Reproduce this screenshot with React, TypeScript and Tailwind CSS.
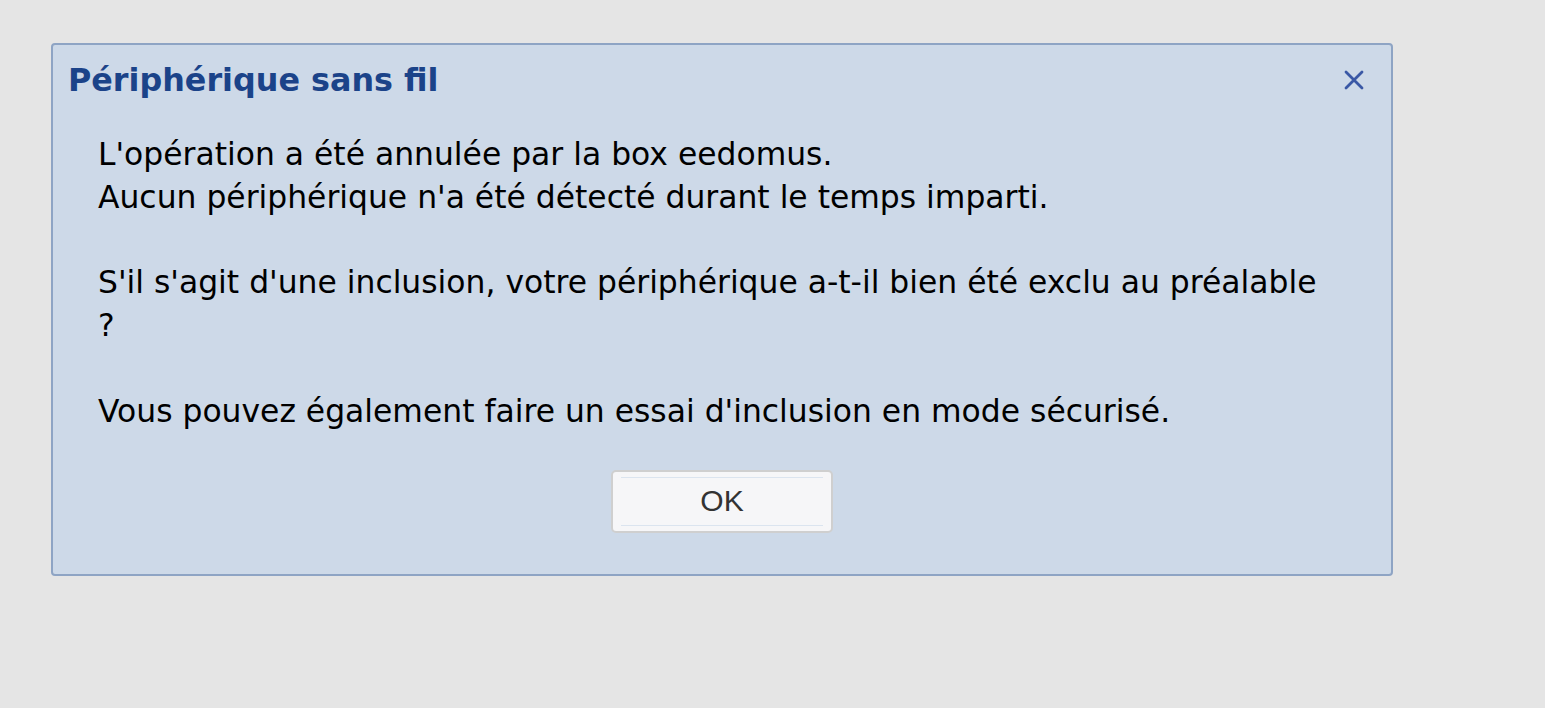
export default function App() {
  return (
    <div className="min-h-screen w-full bg-[#e5e5e5] pt-[43px] pl-[51px]" style={{ fontFamily: '"DejaVu Sans", Verdana, sans-serif' }}>
      <div className="flex h-[533px] w-[1342px] flex-col rounded-[4px] border-2 border-[#8ea4c4] bg-[#cdd9e8]">
        <div className="flex items-center justify-between pl-[15px] pr-[24px] pt-[17px]">
          <h1 className="text-[31.8px] font-bold leading-[36px] text-[#1b4389]">Périphérique sans fil</h1>
          <button className="flex h-[26px] w-[26px] items-center justify-center text-[#3a58a5]">
            <svg width="24" height="24" viewBox="0 0 24 24" fill="none" stroke="currentColor" strokeWidth="2.8" strokeLinecap="round">
              <path d="M4 4 L20 20 M20 4 L4 20" />
            </svg>
          </button>
        </div>
        <div className="pl-[45px] pr-[40px] pt-[35px] text-[31.4px] leading-[42.8px] text-black">
          <p>L'opération a été annulée par la box eedomus.</p>
          <p>Aucun périphérique n'a été détecté durant le temps imparti.</p>
          <p className="mt-[42.8px]">S'il s'agit d'une inclusion, votre périphérique a-t-il bien été exclu au préalable<br />?</p>
          <p className="mt-[42.8px]">Vous pouvez également faire un essai d'inclusion en mode sécurisé.</p>
        </div>
        <div className="flex justify-center pt-[37px]">
          <button
            className="flex h-[63px] w-[222px] flex-col rounded-[5px] border-2 border-[#cfcfcf] bg-[#f6f6f8] px-[8px] py-[5px] text-[30px] text-[#333]"
            style={{ fontFamily: '"Liberation Sans", Arial, sans-serif' }}
          >
            <span className="flex h-full w-full items-center justify-center border-y border-[#dbe4ef] leading-none">OK</span>
          </button>
        </div>
      </div>
    </div>
  )
}
